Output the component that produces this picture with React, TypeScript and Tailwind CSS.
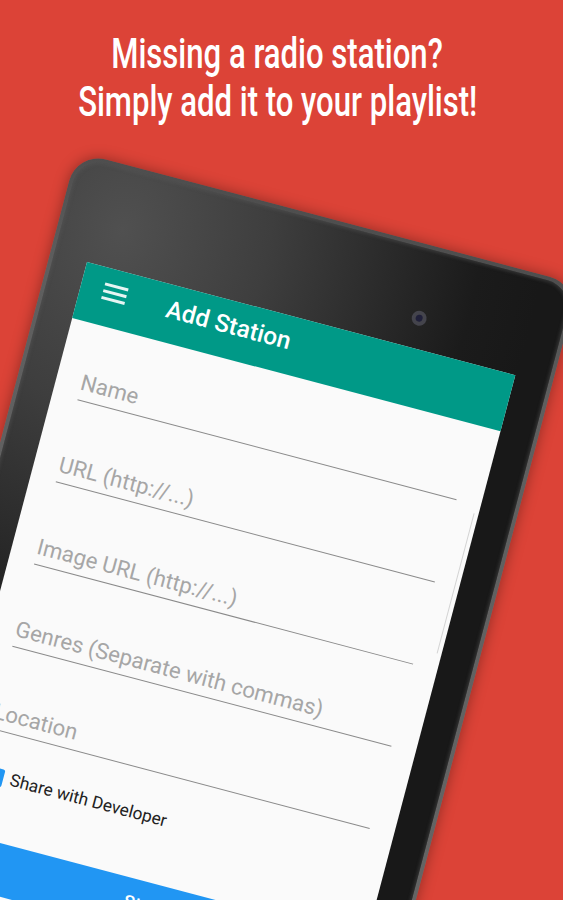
export default function App() {
  const fields = ["Name", "URL (http://...)", "Image URL (http://...)", "Genres (Separate with commas)", "Location"];
  return (
    <div className="relative w-[563px] h-[900px] overflow-hidden bg-[#dc4337] font-['Roboto',sans-serif]">
      <div className="pt-[30px] pr-[8px] flex flex-col items-center text-white text-[42px] leading-[48px] font-medium font-['Roboto',sans-serif]">
        <div className="scale-x-[0.74] whitespace-nowrap">Missing a radio station?</div>
        <div className="scale-x-[0.74] whitespace-nowrap">Simply add it to your playlist!</div>
      </div>
      <div className="absolute left-[49px] top-[158px] w-[519px] h-[1100px] origin-[38px_104px] rotate-[14.8deg] rounded-[30px] p-[4px] bg-[linear-gradient(180deg,#4e4e4e_0,#5e5e5e_120px,#6a6a6a_100%)] shadow-[0_0_14px_rgba(0,0,0,0.35)]">
        <div className="relative w-full h-full rounded-[27px] pt-[100px] pl-[34px] bg-[radial-gradient(ellipse_420px_520px_at_60px_60px,#505050_0,#3e3e3e_35%,#1b1b1b_85%,#181818_100%)] shadow-[inset_0_0_3px_2px_rgba(90,90,90,0.35)]">
          <div className="absolute left-[362px] top-[62px] w-[15px] h-[15px] rounded-full bg-[#20203a] border-[4px] border-[#44444c]" />
          <div className="w-[443px] h-[900px] bg-[#fafafa] relative">
            <div className="h-[58px] bg-[#009987] flex items-center text-white pl-[23px]">
              <div className="flex flex-col gap-[4px] w-[24px] -mt-[12px]">
                <div className="h-[3px] bg-white/90" />
                <div className="h-[3px] bg-white/90" />
                <div className="h-[3px] bg-white/90" />
              </div>
              <div className="ml-[42px] -mt-[8px] text-[24.5px] font-medium leading-none">Add Station</div>
            </div>
            <div className="pl-[26px] pr-[25px] pt-[29px]">
              {fields.map((f) => (
                <div key={f} className="h-[86px] last:h-[74px] -mb-px first:h-[49px] flex items-end border-b border-[#8a8a8a] text-[22.2px] leading-[30px] text-[#a6a6a6] whitespace-nowrap">
                  <span className="-ml-[1px] pb-[3px]">{f}</span>
                </div>
              ))}
              <div className="flex items-center h-[92px] ml-[7px] gap-[7px] text-[17.3px] text-[#222]">
                <div className="w-[18px] h-[18px] rounded-[2px] bg-[#2196f3]" />
                <span className="whitespace-nowrap">Share with Developer</span>
              </div>
            </div>
            <div className="mx-[26px] mt-[17px] h-[52px] pb-[6px] pr-[6px] bg-[#2196f3] text-white text-[18px] font-medium flex items-center justify-center">Start</div>
            <div className="absolute right-[4px] top-[144px] h-[145px] w-px rounded-t bg-[#d4d4d4]" />
          </div>
        </div>
      </div>
    </div>
  );
}
